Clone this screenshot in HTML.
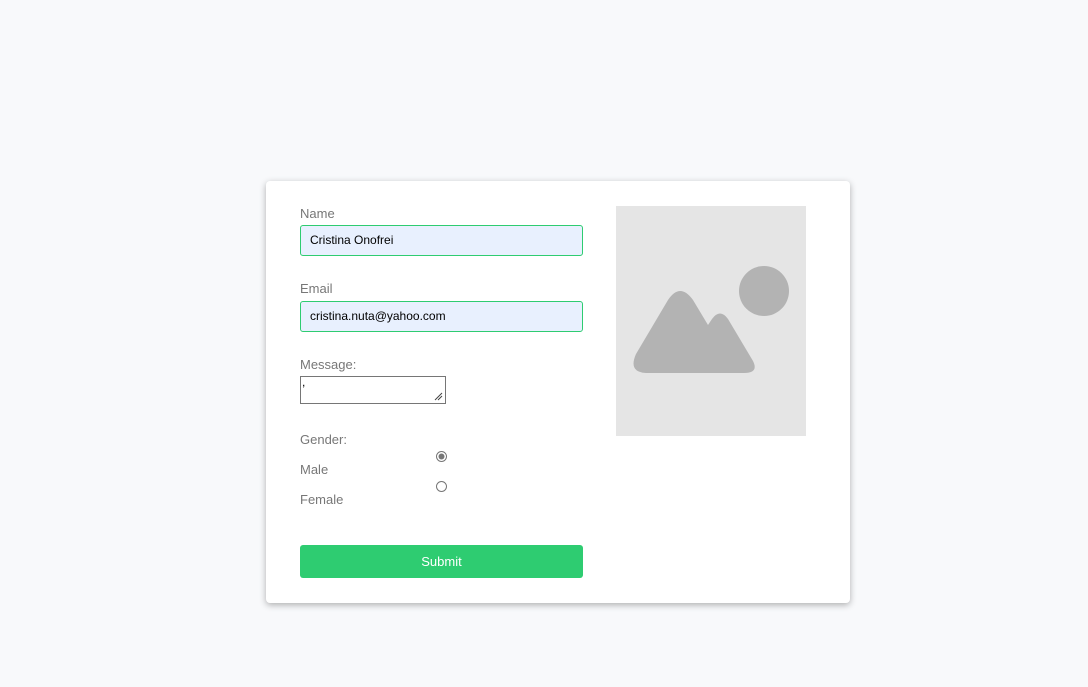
<!DOCTYPE html>
<html><head><style>
body{margin:0;background:#f8f9fb;width:1088px;height:687px;position:relative;font-family:"Liberation Sans",Arial,sans-serif;}
.card{position:absolute;left:266px;top:181px;width:584px;height:422px;background:#fff;border-radius:4px;box-shadow:0 2px 7px rgba(0,0,0,.3);}
.a{position:absolute;}
.lbl{color:#777;font-size:13px;}
.inp{position:absolute;left:300px;background:#e8f0fe;border:1px solid #2ecc71;border-radius:3px;font-size:12px;color:#000;line-height:29px;padding-left:9px;box-sizing:border-box;width:283px;height:31px;}
</style></head><body>
<div class="card"></div>
<div class="a lbl" style="left:300px;top:206px">Name</div>
<div class="inp" style="top:225px">Cristina Onofrei</div>
<div class="a lbl" style="left:300px;top:281px">Email</div>
<div class="inp" style="top:301px">cristina.nuta@yahoo.com</div>
<div class="a lbl" style="left:300px;top:357px">Message:</div>
<div class="a" style="left:300px;top:376px;width:146px;height:28px;border:1px solid #767676;box-sizing:border-box;font-size:12px;line-height:10px;padding-left:1px">,
<svg style="position:absolute;right:2px;bottom:2px" width="9" height="9"><path d="M1 8L8 1M4 8L8 4" stroke="#444" stroke-width="1"/></svg></div>
<div class="a lbl" style="left:300px;top:432px">Gender:</div>
<div class="a lbl" style="left:300px;top:462px">Male</div>
<div class="a lbl" style="left:300px;top:492px">Female</div>
<svg class="a" style="left:435px;top:450px" width="13" height="13"><circle cx="6.5" cy="6.5" r="5" fill="#fff" stroke="#767676"/><circle cx="6.5" cy="6.5" r="3" fill="#767676"/></svg>
<svg class="a" style="left:435px;top:480px" width="13" height="13"><circle cx="6.5" cy="6.5" r="5" fill="#fff" stroke="#767676"/></svg>
<div class="a" style="left:300px;top:545px;width:283px;height:33px;background:#2ecc71;border-radius:3px;color:#fff;font-size:13px;text-align:center;line-height:33px">Submit</div>
<svg class="a" style="left:616px;top:206px" width="190" height="230">
<rect width="190" height="230" fill="#e5e5e5"/>
<circle cx="148" cy="85" r="25" fill="#b3b3b3"/>
<path d="M20 148 L52 94 Q64 76 77 94 L92 119 L96 113 Q104 102 112 113 L137 155 Q143 167 128 167 L30 167 Q12 166 20 148Z" fill="#b3b3b3"/>
</svg>
</body></html>
